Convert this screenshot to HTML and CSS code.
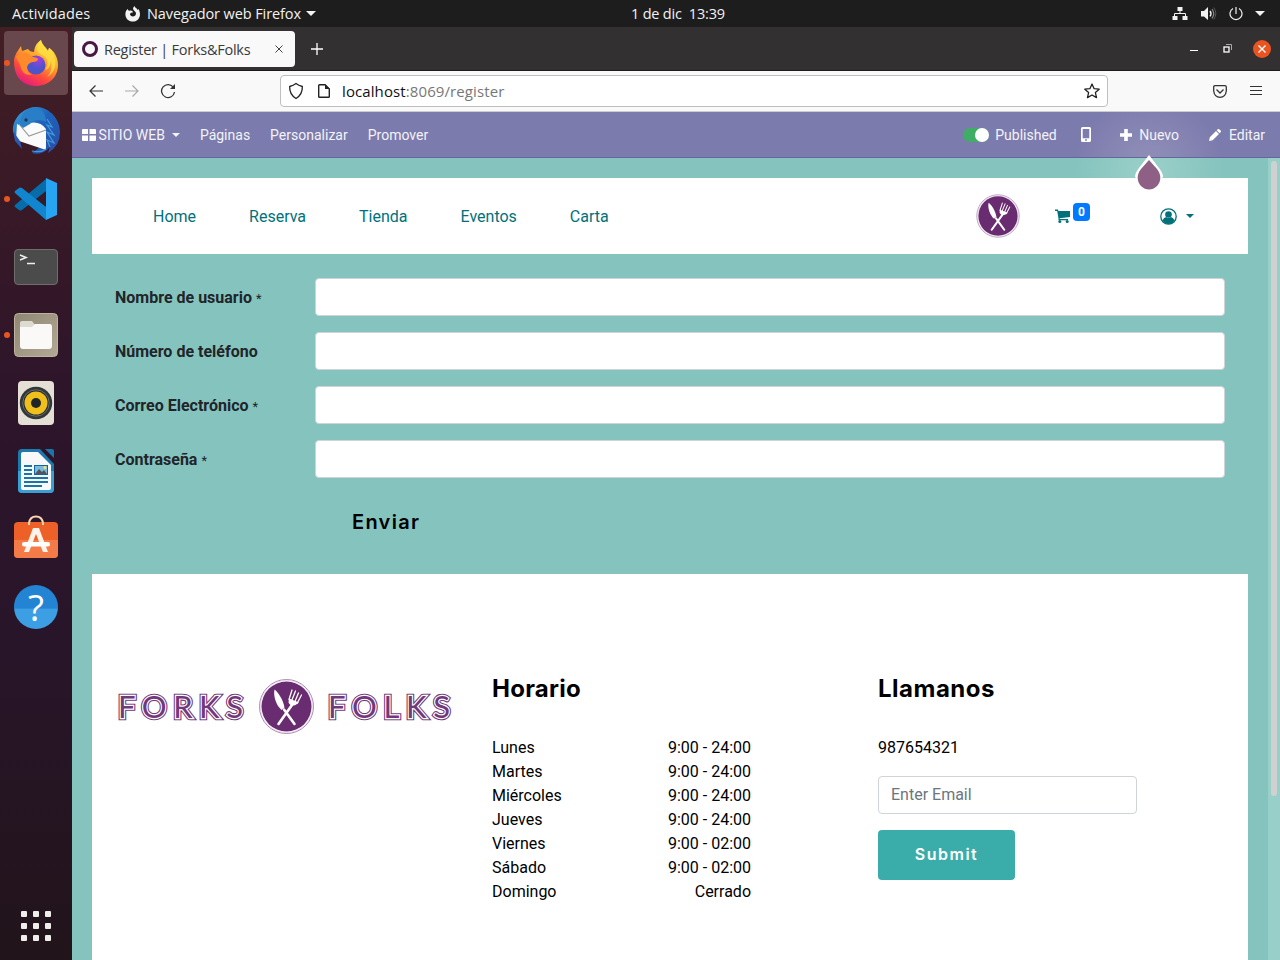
FILE: index.html
```html
<!DOCTYPE html>
<html lang="es">
<head>
<meta charset="utf-8">
<title>Register | Forks&amp;Folks</title>
<link rel="stylesheet" href="styles.css">
</head>
<body>
<svg class="defs" width="0" height="0" aria-hidden="true">
  <defs>
    <symbol id="emblem" viewBox="0 0 56 56">
      <circle cx="28" cy="28" r="27" fill="#fff" stroke="#8b5794" stroke-width=".7"/>
      <circle cx="28" cy="28" r="26.100" fill="none" stroke="#d9c6dc" stroke-width=".5"/>
      <circle cx="28" cy="28" r="25" fill="#6a2c70"/>
      <path d="M16 11C14.500 18 18 27 23 31.500L26 29C24.500 21 20 14 16 11Z" fill="#fff"/>
      <path d="M25.500 31L36 45.500M20 45.500L33.500 26.500" stroke="#fff" stroke-width="2.600" stroke-linecap="round"/>
      <path d="M30.500 20L30 24Q32 28.500 37 26.500L40.500 24Z" fill="#fff"/>
      <path d="M30.500 21L33.500 11.500M33 22.500L37 12.500M36 24L40 14.500M38.500 25L43 16.500" stroke="#fff" stroke-width="1.300" stroke-linecap="round"/>
    </symbol>
    <linearGradient id="fire" x1=".8" y1="0" x2=".25" y2="1"><stop offset="0" stop-color="#fff44f"/><stop offset=".4" stop-color="#ffa52a"/><stop offset=".7" stop-color="#ff4b3b"/><stop offset="1" stop-color="#e31587"/></linearGradient>
    <radialGradient id="globe" cx=".6" cy=".2"><stop offset="0" stop-color="#a63be6"/><stop offset="1" stop-color="#4b54c9"/></radialGradient>
    <linearGradient id="bird" x1="0" y1="0" x2="1" y2="1"><stop offset="0" stop-color="#40a5dc"/><stop offset=".45" stop-color="#1d63bd"/><stop offset="1" stop-color="#2c4ba4"/></linearGradient>
    <linearGradient id="files" x2="1" y2="1"><stop stop-color="#8f8774"/><stop offset="1" stop-color="#b2aa94"/></linearGradient>
  </defs>
</svg>
<div class="desktop">
  <header class="topbar">
    <span class="act">Actividades</span>
    <span class="app"><svg class="fxmini" width="16" height="16" viewBox="0 0 16 16"><path d="M1 5L2.500 3L4 5C6 4 8 5 8 6.500Q5 6 5 8.500C6 11.500 11 11 11 7.500C11 5 8 5 8 2L9.500 0C10 2 12 2 12.500 4L13.500 3C17 9 14 15.500 8 15.500S-1 10 1 5Z" fill="#f2f2f2"/></svg><b class="appname">Navegador web Firefox</b><i class="caret"></i></span>
    <time class="clock">1 de dic&nbsp; 13:39</time>
    <span class="tray">
      <svg width="16" height="14" viewBox="0 0 16 14"><path d="M5.500 0h5v4h-5zM.500 9h5v4H.500zM10.500 9h5v4h-5z" fill="#f2f2f2"/><path d="M8 4v3M2.500 9V6.500h11V9" fill="none" stroke="#f2f2f2"/></svg>
      <svg class="vol" width="16" height="14" viewBox="0 0 16 14"><path d="M0 4h3l4-4v13L3 9.500H0Z" fill="#f2f2f2"/><path d="M9 4q2 2.700 0 5.400" fill="none" stroke="#f2f2f2" stroke-width="1.400"/><path d="M11 2q3.500 4.700 0 9.400" fill="none" stroke="#888" stroke-width="1.200"/><path d="M12.800.500q4 6 0 12" fill="none" stroke="#555"/></svg>
      <svg class="pow" width="14" height="14" viewBox="0 0 14 14"><path d="M4 1.400a6 6 0 1 0 6 0M7 0v7" fill="none" stroke="#f2f2f2" stroke-width="1.200"/></svg>
      <i class="caret"></i>
    </span>
  </header>
  <div class="work">
    <nav class="dock">
      <span class="cell active run"><svg viewBox="0 0 48 48"><path d="M2 23C2 17 5 13 7 10L9 7L10 12L16 10Q18 13 22 13C23 6 25 4 29 1C30 6 34 8 36 12L37 9C42 12 46 18 46 26C46 38 37 47 24 47S2 38 2 23Z" fill="url(#fire)"/><circle cx="24" cy="26" r="9.500" fill="url(#globe)"/><path d="M4 18C8 12 15 13 19 17C22 19 25 18 26 20C25 24 21 22 18 24C13 27 15 33 20 36Q10 37 8 26Z" fill="#ff8a2b"/><path d="M29 1C24 7 23 13 30 16C35 18 38 24 33 31C37 30 39 26 38 22C41 28 39 34 35 38C43 34 46 24 41 15Q40 10 37 9L36 12C33 8 30 6 29 1Z" fill="#ffe143" opacity=".75"/></svg></span>
      <span class="cell"><svg viewBox="0 0 48 48"><path d="M1 25C0 13 9 2 22 0C36-1 48 11 48 25Q48 39 36 46L38 40Q30 49 20 46L35 35L7 33Z" fill="url(#bird)"/><path d="M5 17L4 33L34 43L34 22Q28 14 18 16L11 20Z" fill="#fafafa"/><path d="M7 17L17 29L34 23" fill="none" stroke="#999" stroke-width="1.100"/><path d="M1 24L3 34L10 42L8 34Z" fill="#285bb3"/><path d="M8 18Q8 3 22 0Q34 3 34 15Q24 10 18 17L11 21Z" fill="#287fc7"/><path d="M35 12L40 20L35 18L42 28L35 25L42 36L35 33L38 40M20 44Q29 46 34 42" fill="none" stroke="#429bd9" stroke-width="1.200"/><circle cx="14" cy="13" r="1.700" fill="#28364a"/></svg></span>
      <span class="cell run"><svg viewBox="0 0 48 48"><path d="M3 30Q2 31 3 32L7 35Q8 36 10 35L34 16V4Z" fill="#076daa"/><path d="M3 18Q2 17 3 16L7 13Q8 12 10 13L34 32V45Z" fill="#1285cf"/><path d="M34 3L45 8V40L34 45Z" fill="#27a4f2"/></svg></span>
      <span class="cell"><svg viewBox="0 0 48 48"><rect x="2.500" y="6.500" width="43" height="35" rx="3.500" fill="#4b4b4b" stroke="#6d6d6b"/><path d="M8 12L14 14.500L8 17M15 20.500H23" fill="none" stroke="#eee" stroke-width="1.600"/></svg></span>
      <span class="cell run"><svg viewBox="0 0 48 48"><rect x="2.500" y="2.500" width="43" height="43" rx="4" fill="url(#files)" stroke="#bcb49f"/><path d="M8 12Q8 10 10 10H20L23 14H38V30H8Z" fill="#dedbd2"/><path d="M8 16H20L23 13H38Q40 13 40 16V35Q40 38 37 38H11Q8 38 8 35Z" fill="#faf9f7"/></svg></span>
      <span class="cell"><svg viewBox="0 0 48 48"><rect x="6" y="2" width="36" height="44" rx="4" fill="#e4e0d6"/><circle cx="24" cy="24" r="16.200" fill="#34383a"/><circle cx="24" cy="24" r="13.200" fill="#252a2c" stroke="#697070"/><circle cx="24" cy="24" r="11.500" fill="#efc01c"/><circle cx="24" cy="24" r="5" fill="#202527"/></svg></span>
      <span class="cell"><svg viewBox="0 0 48 48"><path d="M10 2H28L42 17V42Q42 46 38 46H10Q6 46 6 42V6Q6 2 10 2Z" fill="#1e78ac"/><path d="M6 24H42V42Q42 46 38 46H10Q6 46 6 42Z" fill="#3a9fd3"/><path d="M11 5H26L39 18V41Q39 43 37 43H11Q9 43 9 41V7Q9 5 11 5Z" fill="#f8f8f8"/><path d="M33 2H40Q42 2 42 4V11Z" fill="#1a75a9"/><path d="M12 19h8M12 23h8M12 27h8M12 31h24M12 35h24M12 39h18" stroke="#1974aa" stroke-width="2"/><rect x="22.500" y="18.500" width="13" height="9" fill="#78bce3" stroke="#12679d"/><path d="M23 27L27 22L30 25L32 23L35 27Z" fill="#555"/><circle cx="33" cy="20.500" r="1.500" fill="#ffe25c"/></svg></span>
      <span class="cell"><svg viewBox="0 0 48 48"><rect x="2" y="7" width="44" height="36" rx="4" fill="#ed6027"/><path d="M2 25H46V39Q46 43 42 43H6Q2 43 2 39Z" fill="#f47b48"/><path d="M17 10V8Q18 1.500 24 1.500T31 8V10" fill="none" stroke="#f6d5ad" stroke-width="2"/><path d="M21 13H27L36 37H31L24 19L17 37H12Z" fill="#fff2e8"/><rect x="10" y="27" width="28" height="4.500" rx="2" fill="#fff"/></svg></span>
      <span class="cell help"><b class="helpdisc">?</b></span>
      <span class="apps"><i></i><i></i><i></i><i></i><i></i><i></i><i></i><i></i><i></i></span>
    </nav>
    <section class="browser">
      <div class="tabs">
        <div class="tab"><i class="favicon"></i><span class="tabtitle">Register | Forks&amp;Folks</span><svg width="8" height="8" viewBox="0 0 8 8"><path d="M.500.500l7 7m0-7l-7 7" stroke="#444"/></svg></div>
        <svg class="newtab" width="12" height="12" viewBox="0 0 12 12"><path d="M6 0v12M0 6h12" stroke="#fff" stroke-width="1.300"/></svg>
        <span class="winbtns"><i class="min"></i><svg width="9" height="9" viewBox="0 0 9 9"><path d="M3 .500h5.500V6" fill="none" stroke="#aaa"/><rect x="1" y="3" width="5" height="5" fill="none" stroke="#fff" stroke-width="1.300"/></svg><i class="close"><svg width="8" height="8" viewBox="0 0 8 8"><path d="M.500.500l7 7m0-7l-7 7" stroke="#fff" stroke-width="1.400"/></svg></i></span>
      </div>
      <div class="toolbar">
        <svg width="16" height="16" viewBox="0 0 16 16"><path d="M15 8H2M7.500 2.500L2 8l5.500 5.500" fill="none" stroke="#333" stroke-width="1.200"/></svg>
        <svg width="16" height="16" viewBox="0 0 16 16"><path d="M1 8H14M8.500 2.500L14 8l-5.500 5.500" fill="none" stroke="#aaa" stroke-width="1.200"/></svg>
        <svg width="16" height="16" viewBox="0 0 16 16"><path d="M13.500 4.500A6.500 6.500 0 1 0 14.500 9" fill="none" stroke="#333" stroke-width="1.300"/><path d="M15 1v5h-5Z" fill="#333"/></svg>
        <div class="url">
          <svg width="16" height="18" viewBox="0 0 16 18"><path d="M8 1.500Q10.500 3.500 14.300 4.500C14.600 10 12 14 8 16.500C4 14 1.400 10 1.700 4.500Q5.500 3.500 8 1.500Z" fill="none" stroke="#222" stroke-width="1.300"/></svg>
          <svg class="doc" width="12" height="14" viewBox="0 0 12 14"><path d="M1.500.700H7L11.300 5v7.500q0 .800-.8.800h-9Q.700 13.300.700 12.500v-11Q.700.700 1.500.700Z" fill="none" stroke="#222" stroke-width="1.400"/><path d="M7 0v5h5Z" fill="#222"/></svg>
          <span class="address"><b>localhost</b>:8069/register</span>
          <svg class="star" width="16" height="16" viewBox="0 0 16 16"><path d="M8 1l2.100 4.700 5.100.500-3.800 3.400 1.100 5L8 12l-4.500 2.600 1.100-5L.800 6.200l5.100-.5Z" fill="none" stroke="#222" stroke-width="1.300" stroke-linejoin="round"/></svg>
        </div>
        <span class="tools"><svg width="14" height="13" viewBox="0 0 14 13"><path d="M2 .700H12q1.300 0 1.300 1.300v4Q12.500 12.300 7 12.300T.700 6V2Q.700.700 2 .700Z" fill="none" stroke="#333" stroke-width="1.300"/><path d="M3.500 4.500L7 8l3.500-3.500" fill="none" stroke="#333" stroke-width="1.300"/></svg><svg width="12" height="10" viewBox="0 0 12 10"><path d="M0 .500h12M0 4.500h12M0 8.500h12" stroke="#333" stroke-width="1"/></svg></span>
      </div>
      <nav class="admin">
        <svg width="14" height="12" viewBox="0 0 14 12"><path d="M1 0h5v5H0V1q0-1 1-1zM7.500 0H13q1 0 1 1v4H7.500zM0 6.500h6V12H1q-1 0-1-1zM7.500 6.500H14V11q0 1-1 1H7.500z" fill="#fff"/></svg>
        <span class="site">SITIO WEB</span><i class="caret"></i><span class="m1">Páginas</span><span class="m2">Personalizar</span><span class="m3">Promover</span>
        <span class="actions"><i class="switch"></i><span class="pub">Published</span>
          <svg class="phone" width="10" height="15" viewBox="0 0 10 15"><path d="M1.500 0h7Q10 0 10 1.500v12Q10 15 8.500 15h-7Q0 15 0 13.500v-12Q0 0 1.500 0ZM1.700 2v9.300h6.600V2Z" fill="#fff" fill-rule="evenodd"/><circle cx="5" cy="13" r=".9" fill="#7c7bad"/></svg>
          <svg class="plus" width="12" height="12" viewBox="0 0 12 12"><path d="M4.200 0h3.600v4.200H12v3.600H7.800V12H4.200V7.800H0V4.200h4.200Z" fill="#fff"/></svg><span class="new">Nuevo</span>
          <svg class="pencil" width="12" height="12" viewBox="0 0 12 12"><path d="M0 12l.8-3.700L7 2l3 3-6.300 6.200ZM7.700 1.300L9 0q.600-.400 1.200.200l1.600 1.600q.500.500 0 1.200l-1.300 1.300Z" fill="#fff"/></svg><span>Editar</span></span>
        <svg class="drop" width="28" height="36" viewBox="0 0 28 36"><path d="M14 0L24 13Q28 18 28 22L25.500 24H2.500L0 22Q0 18 4 13Z" fill="#fff"/><path d="M14 5L22 14C30 24 22 34.500 14 34.500S-2 24 6 14Z" fill="#8f6085"/></svg>
      </nav>
      <main class="page">
        <div class="content">
          <nav class="sitebar"><a>Home</a><a>Reserva</a><a>Tienda</a><a>Eventos</a><a>Carta</a>
            <span class="right"><svg width="44" height="44"><use href="#emblem"/></svg>
            <span class="cart"><svg width="15" height="14" viewBox="0 0 15 14"><path d="M0 .500h3L3.400 2H15v6L4.700 9.300v.7H13v1.200H3.500V9.500L2.200 2H0Z" fill="#00717b"/><circle cx="4.800" cy="12.500" r="1.500" fill="#00717b"/><circle cx="12.200" cy="12.500" r="1.500" fill="#00717b"/></svg><b class="badge">0</b></span>
            <svg class="user" width="17" height="17" viewBox="0 0 17 17"><circle cx="8.500" cy="8.500" r="7.700" fill="none" stroke="#00717b" stroke-width="1.300"/><circle cx="8.500" cy="6.500" r="3.300" fill="#00717b"/><path d="M2.500 12.500Q3.500 9.500 6 9q2.500 1.700 5 0q2.500.5 3.500 3.500Q12 16 8.500 16T2.500 12.500Z" fill="#00717b"/></svg><i class="caret"></i></span>
          </nav>
          <form class="form">
            <label class="row"><span><b>Nombre de usuario</b> <small>*</small></span><input></label>
            <label class="row"><span><b>Número de teléfono</b></span><input></label>
            <label class="row"><span><b>Correo Electrónico</b> <small>*</small></span><input></label>
            <label class="row"><span><b>Contraseña</b> <small>*</small></span><input></label>
            <span class="send">Enviar</span>
          </form>
          <footer class="footer">
            <svg class="brand" width="336" height="58" viewBox="0 0 336 58">
              <defs><g id="words" font-family="Lato" font-weight="400" font-size="31"><text x="2" y="41" textLength="125" lengthAdjust="spacing">FORKS</text><text x="212" y="41" textLength="122" lengthAdjust="spacing">FOLKS</text></g></defs>
              <g class="inline-type"><use href="#words" fill="#70367a" stroke="#70367a" stroke-width="4.600"/><use href="#words" fill="#fff" stroke="#fff" stroke-width="2.400"/><use href="#words" fill="#70367a" stroke="#70367a" stroke-width="0"/></g>
              <svg x="142.500" y="1.500" width="56" height="56"><use href="#emblem"/></svg>
            </svg>
            <section class="hours"><h3>Horario</h3><dl><dt>Lunes</dt><dd>9:00 - 24:00</dd><dt>Martes</dt><dd>9:00 - 24:00</dd><dt>Miércoles</dt><dd>9:00 - 24:00</dd><dt>Jueves</dt><dd>9:00 - 24:00</dd><dt>Viernes</dt><dd>9:00 - 02:00</dd><dt>Sábado</dt><dd>9:00 - 02:00</dd><dt>Domingo</dt><dd>Cerrado</dd></dl></section>
            <section class="call"><h3>Llamanos</h3><p>987654321</p><input placeholder="Enter Email"><button type="button">Submit</button></section>
          </footer>
        </div>
        <div class="scroll"><i></i></div>
      </main>
    </section>
  </div>
</div>
</body>
</html>
```
FILE: styles.css
```css
* { box-sizing: border-box; }
body { margin: 0; font-family: Roboto, sans-serif; }
svg { display: block; flex: none; }
.defs { position: absolute; }
span, b { white-space: nowrap; }
.desktop { width: 1280px; height: 960px; overflow: hidden; display: flex; flex-direction: column; }
.caret { width: 0; height: 0; border: 4px solid transparent; border-top-color: currentColor; border-bottom: 0; flex: none; }

.topbar { height: 27px; flex: none; background: #1d1d1d; color: #f2f2f2; font: 14.5px "Open Sans", sans-serif; display: grid; grid-template-columns: 125px 506px 1fr auto; align-items: center; }
.act { padding-left: 12px; letter-spacing: .15px; }
.app { display: flex; align-items: center; }
.appname { font-weight: 400; margin: 0 5px 0 6px; letter-spacing: -.1px; }
.topbar .caret { border-width: 5px 5px 0; }
.clock { letter-spacing: -.2px; }
.tray { display: flex; align-items: center; padding-right: 15px; }
.vol { margin-left: 13px; }
.pow { margin: 0 12px 0 12px; }

.work { flex: 1; min-height: 0; display: flex; }
.dock { width: 72px; flex: none; background: linear-gradient(#431e24, #3a1a26 15%, #2d152a 40%, #29152a 65%, #21141a); padding: 4px; display: flex; flex-direction: column; gap: 4px; }
.cell { height: 64px; flex: none; display: flex; align-items: center; justify-content: center; position: relative; border-radius: 4px; }
.cell svg { width: 48px; height: 48px; }
.active { background: #68484c; }
.run::before { content: ""; position: absolute; left: 0; top: 29px; width: 6px; height: 6px; border-radius: 50%; background: #e95420; }
.helpdisc { width: 44px; height: 44px; border-radius: 50%; background: linear-gradient(#2384d4 53%, #3d9fe3 54%); color: #fff; font: 37px/44px "Open Sans", sans-serif; text-align: center; }
.apps { margin: auto auto 15px; display: grid; grid-template-columns: repeat(3, 6px); gap: 6px; }
.apps i { height: 6px; background: #eeeeea; border-radius: 1px; }

.browser { flex: 1; min-width: 0; display: flex; flex-direction: column; }
.tabs { height: 44px; flex: none; background: #323031; border-bottom: 1px solid #1c1b1c; display: flex; align-items: center; padding: 0 9px 0 2px; }
.tab { width: 221px; height: 36px; background: #f9f9fa; border-radius: 4px; display: flex; align-items: center; padding: 0 12px 0 8px; font: 14.5px "Open Sans", sans-serif; color: #3a3a3a; }
.favicon { width: 16px; height: 16px; border: 3.5px solid #4a1942; border-radius: 50%; flex: none; }
.tabtitle { margin-left: 6px; flex: 1; letter-spacing: -.25px; padding-top: 1px; }
.newtab { margin-left: 16px; }
.winbtns { margin-left: auto; display: flex; align-items: center; }
.min { width: 8px; height: 1px; background: #fff; margin: 4px 25px 0 0; }
.close { width: 18px; height: 18px; border-radius: 50%; background: #e95420; margin-left: 21px; display: flex; align-items: center; justify-content: center; }
.toolbar { height: 41px; flex: none; background: #f9f9fa; border-bottom: 1px solid #ccc; display: flex; align-items: center; padding: 0 18px 0 16px; gap: 20px; }
.url { width: 828px; height: 32px; margin-left: 84px; border: 1px solid #bfbfc0; border-radius: 4px; background: #fff; display: flex; align-items: center; padding: 0 7px; font: 15px "Open Sans", sans-serif; color: #777; }
.doc { margin: 0 12px 0 14px; }
.address { flex: 1; letter-spacing: .1px; }
.address b { font-weight: 400; color: #111; }
.tools { margin-left: auto; display: flex; align-items: center; gap: 23px; }

.admin { height: 46px; flex: none; background: radial-gradient(circle at 1077px 60px, #9492ba 0, #7c7bad 75px); border-bottom: 1px solid #6665a0; position: relative; display: flex; align-items: center; padding: 0 15px 0 10px; color: #f3f3f8; font-size: 14px; }
.site { margin: 0 7px 0 2.6px; }
.m1 { margin-left: 20px; }
.m2, .m3 { margin-left: 20px; }
.actions { margin-left: auto; display: flex; align-items: center; }
.switch { width: 26px; height: 14px; border-radius: 7px; background: #40ad67; margin-right: 7px; display: flex; justify-content: flex-end; }
.switch::after { content: ""; width: 14px; height: 14px; border-radius: 50%; background: #fff; }
.pub { margin-left: -.5px; }
.phone { margin: 0 29px 0 24.5px; }
.plus { margin-right: 7px; }
.new { margin-right: 30px; }
.pencil { margin-right: 8px; }
.drop { position: absolute; left: 1063px; top: 43px; z-index: 2; }

.page { flex: 1; min-height: 0; display: flex; background: radial-gradient(circle at 1077px 14px, #9bd0c9 0, #85c3be 75px); }
.content { flex: 1; padding: 20px 20px 0; }
.scroll { width: 12px; background: #99cfc9; padding: 3px; }
.scroll i { display: block; height: 635px; border-radius: 3px; background: #d0d0d1; }
.sitebar { height: 76px; background: #fff; display: flex; align-items: center; padding: 0 54px 0 61px; color: #00717b; gap: 53px; }
.right { margin-left: auto; display: flex; align-items: center; }
.cart { margin: 0 70px 0 35px; display: flex; align-items: center; }
.badge { width: 17px; height: 18px; margin: -9px 0 0 3px; border-radius: 4px; background: #007bff; color: #fff; font-size: 12px; line-height: 18px; text-align: center; }
.user { margin-right: 9px; }

.form { height: 320px; padding: 24px 23px 0; color: #212529; }
.row { display: flex; align-items: center; margin-bottom: 16px; }
.row span { width: 200px; }
.row b { font-weight: 700; }
.row small { font-size: 12.8px; }
input { height: 38px; border: 1px solid #ced4da; border-radius: 4px; background: #fff; padding: 0 12px; font: 16px Roboto, sans-serif; }
.row input { flex: 1; }
.send { display: block; margin: 30px 0 0 237px; color: #000; font: 600 20px/28px Inter, sans-serif; letter-spacing: 1.3px; }

.footer { height: 500px; background: #fff; padding: 100px 111px 0 24px; display: flex; color: #000; line-height: 24px; }
.brand { margin-top: 3px; }
.inline-type { opacity: .99; }
.hours { width: 259px; margin-left: 40px; }
h3 { margin: 0 0 33px; font: 700 24px/29px Inter, sans-serif; letter-spacing: .25px; }
.call h3 { letter-spacing: .5px; }
dl { margin: 0; display: grid; grid-template-columns: 1fr auto; }
dd { margin: 0; text-align: right; }
.call { width: 259px; margin-left: 127px; }
.call p { margin: 0 0 16px; }
.call input { display: block; width: 259px; padding-bottom: 2px; }
input::placeholder { color: #6c757d; opacity: 1; }
.call button { display: block; width: 137px; height: 50px; margin-top: 16px; padding: 0 0 2px; border: 0; border-radius: 4px; background: #3aadaa; color: #fff; font: 600 16px Inter, sans-serif; letter-spacing: 1.5px; }
```
